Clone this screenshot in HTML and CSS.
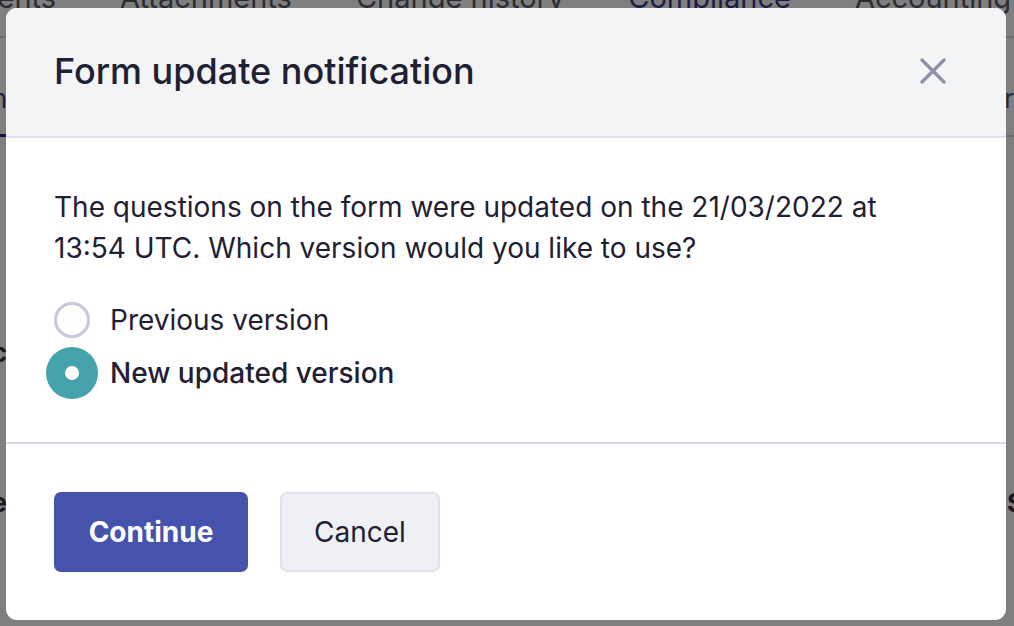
FILE: index.html
```html
<!DOCTYPE html>
<html lang="en">
<head>
<meta charset="utf-8">
<title>Form update notification</title>
<link rel="stylesheet" href="styles.css">
</head>
<body>
<div class="page">
  <nav class="tabs">
    <span class="tab tab-first">Recipients</span>
    <span class="tab">Attachments</span>
    <span class="tab">Change history</span>
    <span class="tab tab-active">Compliance</span>
    <span class="tab">Accounting</span>
  </nav>
  <div class="subtabs">
    <span class="clip clip-left subtab-active"><span>Question</span></span>
    <span class="clip clip-right-end"><span>Other</span></span>
  </div>
  <div class="content">
    <div class="content-row row-a">
      <span class="clip clip-left"><span>Doc</span></span>
    </div>
    <div class="content-row row-b">
      <span class="clip clip-left"><span>Type</span></span>
      <span class="clip clip-right"><span>Status</span></span>
    </div>
  </div>
</div>

<div class="overlay">
  <div class="modal" role="dialog" aria-labelledby="modal-title">
    <header class="modal-header">
      <h2 class="modal-title" id="modal-title">Form update notification</h2>
      <button class="close-btn" aria-label="Close">
        <svg width="26" height="26" viewBox="0 0 26 26" aria-hidden="true">
          <path d="M2 2 L24 24 M24 2 L2 24" stroke="currentColor" stroke-width="3.2" stroke-linecap="round" fill="none"/>
        </svg>
      </button>
    </header>
    <div class="modal-body">
      <p class="modal-text">The questions on the form were updated on the 21/03/2022 at 13:54 UTC. Which version would you like to use?</p>
      <div class="radio-group">
        <label class="radio-row">
          <span class="radio"></span>
          <span class="radio-label">Previous version</span>
        </label>
        <label class="radio-row">
          <span class="radio radio-checked"><span class="radio-dot"></span></span>
          <span class="radio-label">New updated version</span>
        </label>
      </div>
    </div>
    <footer class="modal-footer">
      <button class="btn btn-primary">Continue</button>
      <button class="btn btn-secondary">Cancel</button>
    </footer>
  </div>
</div>
</body>
</html>
```

FILE: styles.css
```css
* { box-sizing: border-box; }

html, body {
  margin: 0;
  padding: 0;
  height: 100%;
  overflow: hidden;
}

body {
  font-family: Inter, "Noto Sans", "Liberation Sans", sans-serif;
  background: #ffffff;
  color: #1f2033;
}

/* ---------- underlying page (dimmed by the overlay) ---------- */
.page {
  height: 100%;
  overflow: hidden;
}

.tabs {
  display: flex;
  align-items: flex-start;
  gap: 64px;
  height: 60px;
  margin-top: -22px;
  border-bottom: 2px solid #d9dbe4;
  font-size: 29px;
  line-height: 40px;
  color: #575868;
  white-space: nowrap;
  overflow: hidden;
}
.tab-first { margin-left: -86px; }
.tab-active { color: #383c8e; }

.subtabs {
  display: flex;
  justify-content: space-between;
  align-items: center;
  height: 99px;
  padding-top: 24px;
  border-bottom: 2px solid #d9dbe4;
  font-size: 26px;
  color: #555566;
  white-space: nowrap;
}

/* text blocks that only peek out beside the modal */
.clip {
  display: flex;
  width: 7px;
  overflow: hidden;
  white-space: nowrap;
}
.clip-left { justify-content: flex-end; }
.clip-right { justify-content: flex-start; }
.clip-right-end { justify-content: flex-end; width: 8px; }

.subtab-active {
  color: #383c8e;
  align-self: stretch;
  align-items: center;
  border-bottom: 3px solid #262a78;
  margin-bottom: -2px;
}

.content {
  font-size: 26px;
  font-weight: 700;
  line-height: 36px;
  color: #333344;
}
.content-row {
  display: flex;
  justify-content: space-between;
}
.row-a { margin-top: 198px; }
.row-b { margin-top: 114px; }

/* ---------- overlay + modal ---------- */
.overlay {
  position: fixed;
  inset: 0;
  background: rgba(0, 0, 0, 0.5);
  padding: 8px 8px 6px 6px;
}

.modal {
  width: 1000px;
  background: #ffffff;
  border-radius: 11px;
  overflow: hidden;
}

.modal-header {
  display: flex;
  align-items: center;
  justify-content: space-between;
  height: 130px;
  padding: 0 60px 2px 48px;
  background: #f3f4f6;
  border-bottom: 2px solid #e1e3ea;
}

.modal-title {
  margin: 0;
  font-size: 36px;
  font-weight: 500;
  color: #1f2033;
}

.close-btn {
  display: flex;
  padding: 0;
  border: 0;
  background: none;
  color: #8a90aa;
  cursor: pointer;
}

.modal-body {
  padding: 49px 60px 51px 48px;
  border-bottom: 2px solid #d7d9e4;
}

.modal-text {
  margin: 0;
  font-size: 28px;
  line-height: 41px;
  color: #1f2033;
}

.radio-group {
  display: flex;
  flex-direction: column;
  gap: 17px;
  margin-top: 33px;
}

.radio-row {
  display: flex;
  align-items: center;
  gap: 20px;
  height: 36px;
}

.radio {
  display: flex;
  align-items: center;
  justify-content: center;
  width: 36px;
  height: 36px;
  border-radius: 50%;
  border: 3px solid #c6c9d9;
  background: #fff;
  flex-shrink: 0;
}

.radio-checked {
  border: 0;
  background: #45a3ad;
  box-shadow: 0 0 0 8px #45a3ad;
}

.radio-dot {
  width: 14px;
  height: 14px;
  border-radius: 50%;
  background: #fff;
}

.radio-label {
  font-size: 28px;
  color: #1f2033;
}
.radio-checked + .radio-label { font-weight: 500; }

.modal-footer {
  display: flex;
  gap: 32px;
  padding: 48px;
}

.btn {
  height: 80px;
  border-radius: 7px;
  font-family: inherit;
  font-size: 28px;
  cursor: pointer;
}

.btn-primary {
  width: 194px;
  border: 0;
  background: #4553ad;
  color: #ffffff;
  font-weight: 700;
}

.btn-secondary {
  width: 160px;
  border: 2px solid #dfe2ea;
  background: #eef0f6;
  color: #1f2033;
  font-weight: 400;
}
```
